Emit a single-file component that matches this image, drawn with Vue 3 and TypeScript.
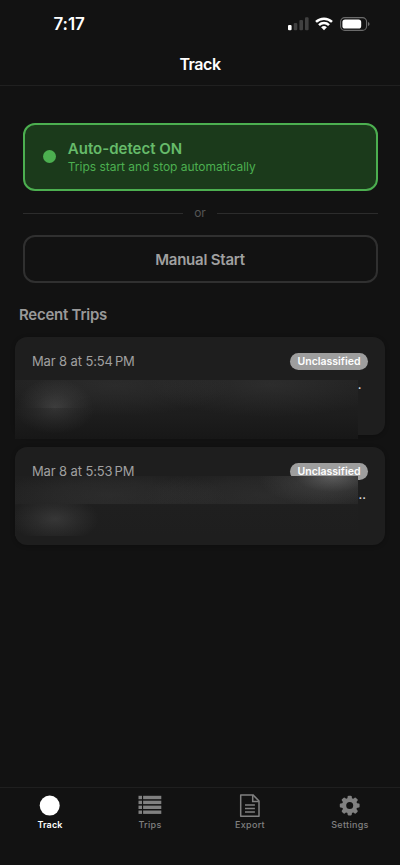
<script setup lang="ts">
interface Trip {
  id: number
  time: string
  dots: string
  status: string
}

const trips: Trip[] = [
  { id: 1, time: '5:54', dots: '.', status: 'Unclassified' },
  { id: 2, time: '5:53', dots: '..', status: 'Unclassified' },
]

const teeth: number[] = [0, 45, 90, 135, 180, 225, 270, 315]
const listRows: number[] = [0, 4.9, 9.8, 14.7]
</script>

<template>
  <div class="screen">
    <div class="status-bar">
      <span class="clock">7:17</span>
      <div class="indicators">
        <svg class="signal" viewBox="0 0 21 14" width="21" height="14">
          <rect x="0" y="8" width="3.6" height="5.3" rx="1.1" fill="#fff" />
          <rect x="5.7" y="6" width="3.6" height="7.3" rx="1.1" fill="#404040" />
          <rect x="11.4" y="3" width="3.6" height="10.3" rx="1.1" fill="#404040" />
          <rect x="17" y="0.3" width="3.6" height="13" rx="1.1" fill="#404040" />
        </svg>
        <svg class="wifi" viewBox="0 0 18 14" width="18" height="14">
          <g fill="none" stroke="#fff" stroke-width="2.5">
            <path d="M1 4.9 A11.6 11.6 0 0 1 17 4.9" />
            <path d="M4 8.1 A7.2 7.2 0 0 1 14 8.1" />
          </g>
          <path d="M9 13.3 L6.1 10.3 A4.2 4.2 0 0 1 11.9 10.3 Z" fill="#fff" />
        </svg>
        <svg class="battery" viewBox="0 0 30 14" width="30" height="14">
          <rect x="0.6" y="0.6" width="26" height="12.8" rx="4.2" fill="none" stroke="#6b6b6b" stroke-width="1.1" />
          <rect x="2.4" y="2.4" width="18.8" height="9.2" rx="2.7" fill="#fff" />
          <path d="M28 5 Q29.6 5.6 29.6 7 Q29.6 8.4 28 9 Z" fill="#6b6b6b" />
        </svg>
      </div>
    </div>

    <header class="header"><h1>Track</h1></header>

    <main class="content">
      <section class="auto-card">
        <span class="dot"></span>
        <div>
          <div class="auto-title">Auto-detect ON</div>
          <div class="auto-sub">Trips start and stop automatically</div>
        </div>
      </section>

      <div class="divider"><i></i><span>or</span><i></i></div>

      <button class="manual" type="button">Manual Start</button>

      <h2 class="recent">Recent Trips</h2>

      <article v-for="trip in trips" :key="trip.id" class="trip">
        <div class="trip-head">
          <span class="trip-date">Mar 8 at {{ trip.time }}<span class="pm">PM</span></span>
          <span class="badge">{{ trip.status }}</span>
        </div>
        <div class="trip-dots" :class="'dots-' + trip.id">{{ trip.dots }}</div>
        <div class="veil" :class="'veil-' + trip.id"></div>
      </article>
    </main>

    <nav class="tabs">
      <a class="tab active">
        <svg viewBox="0 0 24 24" width="24" height="24"><circle cx="11.7" cy="11.6" r="10" fill="currentColor" /></svg>
        <span class="track-label">Track</span>
      </a>
      <a class="tab">
        <svg viewBox="0 0 24 24" width="24" height="24" fill="currentColor">
          <g v-for="y in listRows" :key="y">
            <rect x="0.5" :y="y + 1.8" width="3.5" height="3.4" />
            <rect x="5.1" :y="y + 1.8" width="18.2" height="3.4" />
          </g>
        </svg>
        <span class="trips-label">Trips</span>
      </a>
      <a class="tab">
        <svg viewBox="0 0 24 24" width="24" height="24" fill="none" stroke="currentColor" stroke-width="1.5">
          <path d="M2.7 0.9 H15 L21 7 V22.3 H2.7 Z" stroke-linejoin="round" />
          <path d="M14.7 1.1 V7.4 H20.8" />
          <path d="M7 11 H16.9 M7 14.5 H16.9 M7 18 H16.9" stroke-width="1.4" />
        </svg>
        <span class="export-label">Export</span>
      </a>
      <a class="tab">
        <svg viewBox="0 0 24 24" width="24" height="24" fill="currentColor">
          <g transform="translate(-0.3 -0.4)">
            <path
              v-for="angle in teeth"
              :key="angle"
              d="M9.4 6.5 L10 2.9 Q10.2 2.1 11 2.1 H13 Q13.8 2.1 14 2.9 L14.6 6.5 Z"
              :transform="`rotate(${angle} 12 12)`"
            />
            <circle cx="12" cy="12" r="5.6" fill="none" stroke="currentColor" stroke-width="4.2" />
          </g>
        </svg>
        <span class="settings-label">Settings</span>
      </a>
    </nav>
  </div>
</template>

<style>
body {
  background: #121212;
}
</style>

<style scoped>
.screen {
  width: 400px;
  height: 865px;
  overflow: hidden;
  display: flex;
  flex-direction: column;
  background: #121212;
  color: #fff;
  font-family: Inter, "Liberation Sans", sans-serif;
}
.status-bar {
  height: 47px;
  flex: none;
  box-sizing: border-box;
  display: flex;
  justify-content: space-between;
  align-items: center;
  padding: 0 30px 0 53.5px;
}
.clock {
  font-size: 17px;
  font-weight: 600;
  letter-spacing: -0.1px;
}
.indicators {
  display: flex;
  gap: 7px;
}
.signal { margin-right: -0.5px; }
.header {
  height: 39px;
  flex: none;
  box-sizing: border-box;
  border-bottom: 1px solid #202020;
  display: flex;
  justify-content: center;
}
h1 {
  margin: 7px 0 0;
  font-size: 16px;
  line-height: 20px;
  font-weight: 600;
  letter-spacing: -0.45px;
}
.content {
  flex: 1;
  display: flex;
  flex-direction: column;
  padding: 36.5px 15px 0;
}
.auto-card {
  box-sizing: border-box;
  height: 68px;
  margin: 0 7.5px;
  border: 2px solid #4caf50;
  border-radius: 12px;
  background: #1b3a1b;
  display: flex;
  align-items: center;
  gap: 12px;
  padding: 0 18.3px;
}
.dot {
  width: 13px;
  height: 13px;
  border-radius: 50%;
  background: #4caf50;
}
.auto-title {
  font-size: 15px;
  line-height: 19px;
  font-weight: 600;
  color: #66bb6a;
}
.auto-sub {
  margin-top: 1px;
  font-size: 12px;
  line-height: 16px;
  letter-spacing: -0.02px;
  color: #4caf50;
}
.divider {
  height: 14px;
  margin: 15.5px 7.5px 15px;
  display: flex;
  align-items: center;
  gap: 11px;
}
.divider i {
  flex: 1;
  height: 1px;
  background: #2c2c2c;
}
.divider span {
  font-size: 12px;
  line-height: 14px;
  color: #555;
}
.manual {
  box-sizing: border-box;
  height: 48px;
  margin: 0 7.5px;
  padding: 0;
  border: 2px solid #303030;
  border-radius: 12px;
  background: transparent;
  color: #a0a0a0;
  font-family: inherit;
  font-size: 15px;
  font-weight: 600;
  letter-spacing: -0.22px;
}
.recent {
  margin: 22px 4px 0;
  font-size: 15px;
  line-height: 20px;
  font-weight: 600;
  letter-spacing: -0.25px;
  color: #999;
}
.trip {
  position: relative;
  box-sizing: border-box;
  height: 98px;
  margin-top: 12px;
  padding: 15.5px 17px;
  border-radius: 12px;
  background: #1e1e1e;
  box-shadow: 0 1px 4px rgba(0, 0, 0, 0.25);
}
.recent + .trip { margin-top: 11.5px; }
.trip-head {
  height: 18px;
  display: flex;
  align-items: center;
  justify-content: space-between;
}
.trip-date {
  position: relative;
  z-index: 1;
  font-size: 13px;
  letter-spacing: -0.12px;
  color: #a0a0a0;
}
.pm { margin-left: 2px; }
.badge {
  box-sizing: border-box;
  width: 78px;
  height: 17px;
  border-radius: 9px;
  background: #9e9e9e;
  color: #fff;
  text-align: center;
  font-size: 10.5px;
  line-height: 17px;
  font-weight: 600;
}
.trip-dots {
  margin-top: 4.5px;
  text-align: right;
  font-size: 13px;
  line-height: 18px;
  color: #e0e0e0;
}
.dots-1 { padding-right: 6.5px; }
.dots-2 { padding-right: 2px; }
.veil {
  position: absolute;
  left: 0;
  width: 343px;
}
.veil-1 {
  top: 43px;
  height: 59px;
  background:
    radial-gradient(ellipse 38px 30px at 40px 28px, rgba(110, 110, 110, 0.38), rgba(110, 110, 110, 0.14) 55%, transparent) 0 0 / 100% 28px no-repeat,
    radial-gradient(ellipse 40px 26px at 40px 0, rgba(110, 110, 110, 0.26), rgba(110, 110, 110, 0.1) 55%, transparent) 0 28px / 100% 31px no-repeat,
    radial-gradient(ellipse 115px 30px at 100px 6px, rgba(100, 100, 100, 0.16), rgba(100, 100, 100, 0.1) 45%, transparent),
    radial-gradient(ellipse 120px 32px at 255px 5px, rgba(100, 100, 100, 0.18), rgba(100, 100, 100, 0.1) 45%, transparent),
    linear-gradient(#212121, #1d1d1d 60%, #171717);
}
.veil-2 {
  top: 29px;
  height: 60px;
  background:
    radial-gradient(ellipse 75px 32px at 318px 0, rgba(150, 150, 150, 0.5), rgba(130, 130, 130, 0.16) 50%, transparent) 0 0 / 100% 28px no-repeat,
    radial-gradient(ellipse 115px 26px at 95px 19px, rgba(95, 95, 95, 0.18), rgba(95, 95, 95, 0.12) 50%, transparent) 0 0 / 100% 28px no-repeat,
    radial-gradient(ellipse 120px 28px at 250px 19px, rgba(95, 95, 95, 0.18), rgba(95, 95, 95, 0.12) 50%, transparent) 0 0 / 100% 28px no-repeat,
    radial-gradient(ellipse 44px 24px at 40px 15px, rgba(110, 110, 110, 0.3), rgba(110, 110, 110, 0.14) 50%, transparent) 0 28px / 100% 32px no-repeat,
    linear-gradient(#1f1f1f, #212121 46%, #1f1f1f 48%, #1e1e1e);
}
.tabs {
  height: 78px;
  flex: none;
  box-sizing: border-box;
  border-top: 1px solid #1f1f1f;
  display: flex;
}
.tab {
  flex: 1;
  display: flex;
  flex-direction: column;
  align-items: center;
  padding-top: 6px;
  color: #808080;
}
.tab.active { color: #fff; }
.tab span {
  margin-top: 1px;
  font-size: 9px;
  line-height: 12px;
  font-weight: 500;
  letter-spacing: 0.3px;
}
.tab.active span {
  font-weight: 600;
  letter-spacing: 0.15px;
}
</style>
